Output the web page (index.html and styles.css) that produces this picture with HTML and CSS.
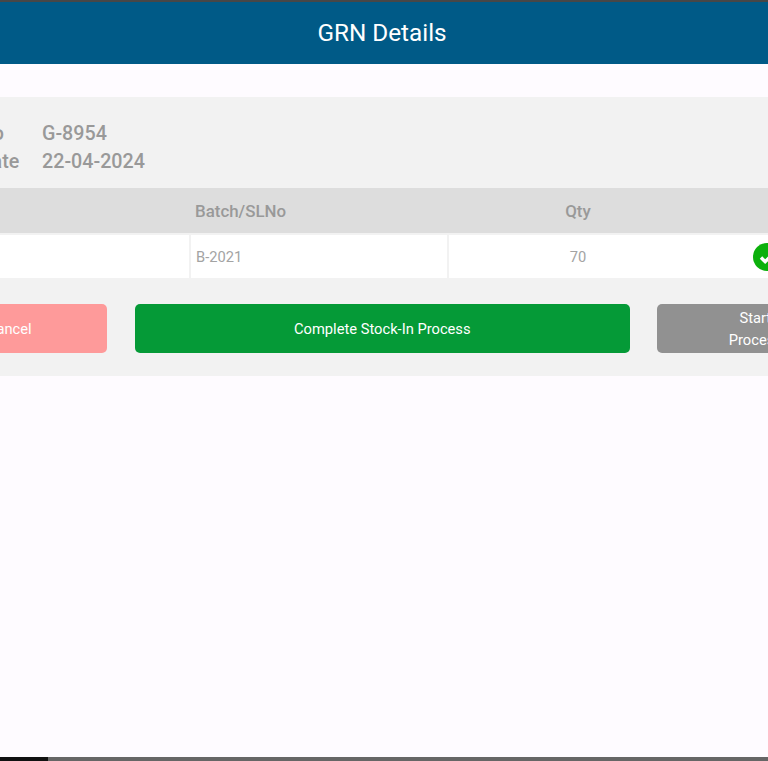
FILE: index.html
```html
<!DOCTYPE html>
<html lang="en">
<head>
<meta charset="utf-8">
<title>GRN Details</title>
<link rel="stylesheet" href="styles.css">
</head>
<body>
<div class="screen">
  <div class="status-line"></div>
  <main class="stage">
    <header class="app-bar"><h1 class="title">GRN Details</h1></header>
    <section class="panel">
      <dl class="info">
        <dt>GRN No</dt><dd>G-8954</dd>
        <dt>GRN Date</dt><dd>22-04-2024</dd>
      </dl>
      <div class="row head-row">
        <div class="cell">Item</div>
        <div class="cell batch-head">Batch/SLNo</div>
        <div class="cell center">Qty</div>
        <div class="cell"></div>
      </div>
      <div class="row body-row">
        <div class="cell"></div>
        <div class="cell batch-val">B-2021</div>
        <div class="cell center">70</div>
        <div class="cell status">
          <svg class="check" viewBox="0 0 28 28" aria-hidden="true">
            <circle cx="14" cy="14" r="14" fill="#0cb00c"/>
            <path d="M8 14.5l4.2 4.2L20.5 10.5" fill="none" stroke="#fff" stroke-width="3.4"/>
          </svg>
        </div>
      </div>
      <div class="actions">
        <button class="btn btn-cancel">Cancel</button>
        <button class="btn btn-complete">Complete Stock-In Process</button>
        <button class="btn btn-start">Start<br>Process</button>
      </div>
    </section>
  </main>
  <div class="bottom-line"><span class="bottom-dark"></span></div>
</div>
</body>
</html>
```
FILE: styles.css
```css
html, body {
  margin: 0;
  padding: 0;
  height: 100%;
  overflow: hidden;
}
body {
  font-family: Roboto, "Liberation Sans", sans-serif;
  background: #fefbff;
}
.screen {
  width: 768px;
  height: 761px;
  overflow: hidden;
  display: flex;
  flex-direction: column;
}
.status-line {
  height: 2px;
  flex: none;
  background: #474747;
}
.stage {
  width: 964px;
  margin-left: -100px;
  flex: none;
}
.app-bar {
  height: 62px;
  box-sizing: border-box;
  padding-bottom: 2px;
  background: #005a87;
  display: flex;
  align-items: center;
  justify-content: center;
}
.title {
  margin: 0;
  font-size: 24.3px;
  font-weight: 400;
  color: #fff;
}
.panel {
  margin-top: 33px;
  height: 279px;
  background: #f2f2f2;
}
.info {
  margin: 0;
  padding: 22px 0 0 34px;
  height: 69px;
  box-sizing: content-box;
  display: grid;
  grid-template-columns: 108px 1fr;
  grid-auto-rows: 28.5px;
  align-items: center;
  font-size: 19.7px;
  font-weight: 500;
  color: #999;
}
.info dd {
  margin: 0;
}
.row {
  display: grid;
  grid-template-columns: 291px 258px 258px 157px;
}
.head-row {
  height: 45px;
  padding-top: 1px;
  box-sizing: border-box;
  background: #ddd;
  font-size: 16.9px;
  font-weight: 500;
  color: #999;
  align-items: center;
}
.body-row {
  height: 43px;
  margin-top: 2px;
  background: #fff;
  font-size: 14.7px;
  color: #a3a3a3;
  align-items: stretch;
}
.body-row .cell {
  display: flex;
  align-items: center;
  padding-top: 1px;
}
.body-row .cell:nth-child(-n+2) {
  border-right: 2px solid #f2f2f2;
}
.cell {
  box-sizing: border-box;
}
.head-row .cell:first-child {
  visibility: hidden;
}
.batch-head {
  padding-left: 4px;
}
.batch-val {
  padding-left: 5px;
}
.center {
  text-align: center;
}
.body-row .center {
  justify-content: center;
}
.body-row .status {
  padding: 0 0 0 46px;
}
.check {
  width: 28px;
  height: 28px;
  display: block;
}
.actions {
  margin-top: 26px;
  display: flex;
  gap: 27.5px;
  padding-left: 11.3px;
}
.btn {
  height: 49px;
  border: 0;
  border-radius: 5px;
  padding: 1px 0 0;
  font-family: inherit;
  font-size: 14.7px;
  line-height: 22px;
  color: #fff;
}
.btn-cancel {
  width: 196px;
  background: #fe9a9a;
}
.btn-complete {
  width: 495px;
  background: #059a37;
}
.btn-start {
  width: 196px;
  background: #919191;
}
.bottom-line {
  margin-top: auto;
  height: 4px;
  flex: none;
  background: #666;
}
.bottom-dark {
  display: block;
  width: 48px;
  height: 100%;
  background: #111;
}
```
